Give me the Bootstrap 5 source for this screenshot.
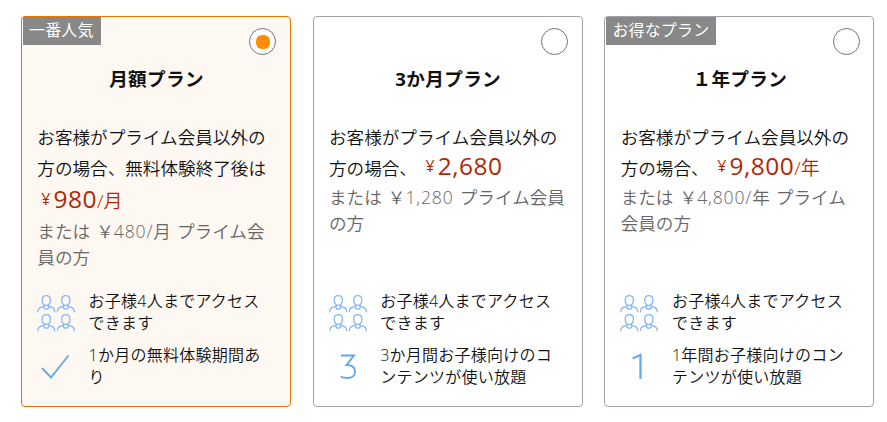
<!DOCTYPE html>
<html lang="ja">
<head>
<meta charset="utf-8">
<meta name="viewport" content="width=device-width, initial-scale=1">
<title>プランの選択</title>
<link href="https://cdn.jsdelivr.net/npm/bootstrap@5.3.0/dist/css/bootstrap.min.css" rel="stylesheet">
<style>
body{font-family:"Open Sans","Noto Sans CJK JP",sans-serif;color:#111;background:#fff}
.plans{padding:16px 0 0 21px;gap:21.7px}
.plan{width:270px;height:391px;border:1px solid #a2a2aa;border-radius:4px;background:#fff;flex:none}
.plan.selected{border-color:#e77600;background:#fef8f2}
.flag{left:1px;top:0;height:28px;padding:0 7px 0 6px;background:#888;color:#fff;font-size:16px;line-height:26px;letter-spacing:.15px;white-space:nowrap}
.radio{right:13.8px;top:11px;width:27px;height:27px;border:1px solid #6c7778;border-radius:50%;background:#fff}
.radio i{width:14px;height:14px;border-radius:6px;background:#ff8f00}
.title{padding:48px 0 0 1px;font-size:18.6px;line-height:28px;font-weight:700;height:105px;letter-spacing:.35px}
.offer{height:168px;padding-left:15.3px;font-size:17.6px;white-space:nowrap;font-weight:350}
.offer .ln{height:32px;line-height:32px}
.offer .first{height:30px;line-height:30px}
.offer .last{height:34px;line-height:35px}
.alt{line-height:26px;color:#666;word-spacing:1.5px}
.alt .digits{letter-spacing:.85px}
.cost{color:#b12704;font-weight:400}
.cost .yen{font-size:16px;position:relative;top:-3px;margin:0 3px 0 4px;line-height:1}
.cost .num{font-size:24.5px;line-height:1;letter-spacing:.5px}
.cost .per{font-weight:350;font-size:19px;line-height:1}
.feats{padding-left:15px;gap:10px}
.feat{font-size:16px;line-height:22px;white-space:nowrap;height:44px;font-weight:350;letter-spacing:.25px}
.feat svg{width:38px;height:40px;margin-right:13.500px;flex:none;fill:none;stroke:#68a9f4}
.feat svg.group{margin-top:4px;stroke:#85b9f6}
</style>
</head>
<body>
<svg class="d-none">
  <symbol id="person" viewBox="0 0 19 18"><path d="M9.3.7C6.700.7 5.200 2.500 5.200 5.100c0 3 1.500 5.400 4.100 5.400s4.100-2.400 4.100-5.400C13.400 2.500 11.900.7 9.300.7zM7 9.700v2.500c0 1.200 1 2 2.300 2s2.300-.8 2.300-2V9.700M7 11.300c-3.600.7-6.200 1.500-6.300 6M11.600 11.300c3.600.7 6.200 1.500 6.300 6"/></symbol>
  <symbol id="people" viewBox="0 0 38 40"><g stroke-width="1.3"><use href="#person" width="19" height="18" y="1"/><use href="#person" x="19.500" width="19" height="18" y="1"/><use href="#person" y="20" width="19" height="18"/><use href="#person" x="19.500" y="20" width="19" height="18"/></g></symbol>
</svg>
<main class="d-flex plans">
  <section class="plan selected position-relative">
    <div class="flag position-absolute">一番人気</div>
    <div class="radio position-absolute d-flex align-items-center justify-content-center"><i></i></div>
    <div class="title text-center">月額プラン</div>
    <div class="offer">
      <div class="first">お客様がプライム会員以外の</div>
      <div class="ln">方の場合、無料体験終了後は</div>
      <div class="last cost"><span class="yen">¥</span><span class="num">980</span><span class="per">/月</span></div>
      <div class="alt">または ￥<span class="digits">480/</span>月 プライム会<br>員の方</div>
    </div>
    <div class="feats d-flex flex-column">
      <div class="feat d-flex"><svg class="group"><use href="#people"/></svg><div>お子様4人までアクセス<br>できます</div></div>
      <div class="feat d-flex"><svg viewBox="0 0 38 40"><path d="M5 24l9 9.500L31.500 11.500" stroke-width="2"/></svg><div>1か月の無料体験期間あ<br>り</div></div>
    </div>
  </section>
  <section class="plan position-relative">
    <div class="radio position-absolute"></div>
    <div class="title text-center">3か月プラン</div>
    <div class="offer">
      <div class="first">お客様がプライム会員以外の</div>
      <div class="ln">方の場合、 <span class="cost"><span class="yen">¥</span><span class="num">2,680</span></span></div>
      <div class="alt">または ￥<span class="digits">1,280</span> プライム会員<br>の方</div>
    </div>
    <div class="feats d-flex flex-column">
      <div class="feat d-flex"><svg class="group"><use href="#people"/></svg><div>お子様4人までアクセス<br>できます</div></div>
      <div class="feat d-flex"><svg viewBox="0 0 38 40"><path d="M12 11.500H25L17.500 21C23 21 26 23 26 27.500C26 32 22.500 34 18.500 34C15.500 34 13 33.500 11.500 32.500" stroke-width="2"/></svg><div>3か月間お子様向けのコ<br>ンテンツが使い放題</div></div>
    </div>
  </section>
  <section class="plan position-relative">
    <div class="flag position-absolute">お得なプラン</div>
    <div class="radio position-absolute"></div>
    <div class="title text-center">１年プラン</div>
    <div class="offer">
      <div class="first">お客様がプライム会員以外の</div>
      <div class="ln">方の場合、 <span class="cost"><span class="yen">¥</span><span class="num">9,800</span><span class="per">/年</span></span></div>
      <div class="alt">または ￥<span class="digits">4,800/</span>年 プライム<br>会員の方</div>
    </div>
    <div class="feats d-flex flex-column">
      <div class="feat d-flex"><svg class="group"><use href="#people"/></svg><div>お子様4人までアクセス<br>できます</div></div>
      <div class="feat d-flex"><svg viewBox="0 0 38 40"><path d="M12.500 14.500L20.500 11V35" stroke-width="2.300"/></svg><div>1年間お子様向けのコン<br>テンツが使い放題</div></div>
    </div>
  </section>
</main>
<script src="https://cdn.jsdelivr.net/npm/bootstrap@5.3.0/dist/js/bootstrap.bundle.min.js"></script>
</body>
</html>
